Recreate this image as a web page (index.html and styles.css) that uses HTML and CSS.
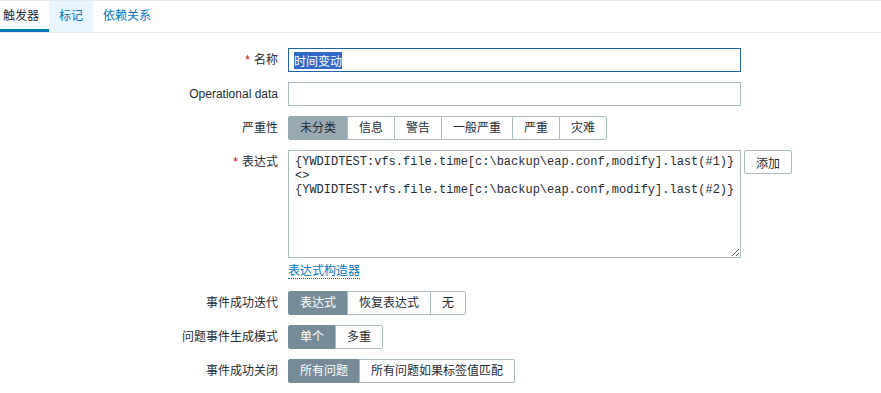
FILE: index.html
```html
<!DOCTYPE html>
<html lang="zh-CN">
<head>
  <meta charset="UTF-8" />
  <title>触发器</title>
<link rel="stylesheet" href="styles.css">
</head>
<body>
  <ul class="tabs">
    <li class="tab active">触发器</li>
    <li class="tab hover">标记</li>
    <li class="tab">依赖关系</li>
  </ul>

  <div class="form">
    <label class="form-label"><span class="req">*</span>名称</label>
    <div class="form-field">
      <input type="text" class="text-input focused" value="时间变动" autofocus onfocus="this.select()" />
    </div>

    <label class="form-label">Operational data</label>
    <div class="form-field">
      <input type="text" class="text-input" />
    </div>

    <label class="form-label">严重性</label>
    <div class="form-field">
      <div class="radio-group">
        <span class="radio-btn soft">未分类</span>
        <span class="radio-btn">信息</span>
        <span class="radio-btn">警告</span>
        <span class="radio-btn">一般严重</span>
        <span class="radio-btn">严重</span>
        <span class="radio-btn">灾难</span>
      </div>
    </div>

    <label class="form-label"><span class="req">*</span>表达式</label>
    <div class="form-field">
      <div class="expr-row">
        <textarea class="expr" wrap="off" spellcheck="false">{YWDIDTEST:vfs.file.time[c:\backup\eap.conf,modify].last(#1)}
&lt;&gt;
{YWDIDTEST:vfs.file.time[c:\backup\eap.conf,modify].last(#2)}</textarea>
        <button class="add-btn">添加</button>
      </div>
      <div class="link-row"><a class="link">表达式构造器</a></div>
    </div>

    <label class="form-label">事件成功迭代</label>
    <div class="form-field">
      <div class="radio-group">
        <span class="radio-btn on">表达式</span>
        <span class="radio-btn">恢复表达式</span>
        <span class="radio-btn">无</span>
      </div>
    </div>

    <label class="form-label">问题事件生成模式</label>
    <div class="form-field">
      <div class="radio-group">
        <span class="radio-btn on">单个</span>
        <span class="radio-btn">多重</span>
      </div>
    </div>

    <label class="form-label">事件成功关闭</label>
    <div class="form-field">
      <div class="radio-group">
        <span class="radio-btn on">所有问题</span>
        <span class="radio-btn">所有问题如果标签值匹配</span>
      </div>
    </div>
  </div>
</body>
</html>
```

FILE: styles.css
```css
body {
  margin: 0;
  padding: 0;
  background: #fff;
  color: #1f2c33;
  font-family: "Liberation Sans", Arial, "Noto Sans CJK SC", sans-serif;
  font-size: 12px;
}
.tabs {
  display: flex;
  margin: 0;
  padding: 0;
  list-style: none;
  border-top: 1px solid #e6e9eb;
  border-bottom: 1px solid #ebeef0;
}
.tab {
  height: 31px;
  line-height: 31px;
  padding: 0 10px;
  color: #0275b8;
}
.tab.active {
  padding-left: 3px;
  color: #1f2c33;
  box-shadow: inset 0 -3px 0 #0275b8;
}
.tab.hover {
  background: #e8f5ff;
}
.form {
  display: grid;
  grid-template-columns: 278px auto;
  column-gap: 10px;
  row-gap: 10px;
  padding-top: 15px;
}
.form-label {
  text-align: right;
  line-height: 24px;
}
.req {
  color: #d40000;
  margin-right: 4px;
}
.text-input {
  display: block;
  box-sizing: border-box;
  width: 453px;
  height: 24px;
  margin: 0;
  padding: 0 5px;
  border: 1px solid #acbbc2;
  border-radius: 0;
  font-family: "Liberation Sans", Arial, "Noto Sans CJK SC", sans-serif;
  font-size: 12px;
  color: #1f2c33;
  outline: none;
}
.text-input.focused {
  border-color: #1f65a6;
}
.text-input::selection {
  background: #3169c6;
  color: #fff;
}
.radio-group {
  display: flex;
}
.radio-btn {
  height: 22px;
  line-height: 22px;
  padding: 0 11px;
  border: 1px solid #acbbc2;
  background: #fff;
  margin-left: -1px;
}
.radio-btn:first-child {
  margin-left: 0;
  border-radius: 2px 0 0 2px;
}
.radio-btn:last-child {
  border-radius: 0 2px 2px 0;
}
.radio-btn.soft {
  background: #98a9b3;
  border-color: #98a9b3;
}
.radio-btn.on {
  background: #768d99;
  border-color: #768d99;
  color: #fff;
}
.expr-row {
  display: flex;
  align-items: flex-start;
}
.expr {
  display: block;
  box-sizing: border-box;
  width: 453px;
  height: 108px;
  margin: 0;
  padding: 4px 6px;
  border: 1px solid #acbbc2;
  font-family: "Liberation Mono", "Courier New", monospace;
  font-size: 12px;
  line-height: 14px;
  white-space: pre;
  overflow: hidden;
  color: #1f2c33;
  outline: none;
}
.add-btn {
  margin-left: 3px;
  height: 24px;
  padding: 0 11px;
  border: 1px solid #acbbc2;
  border-radius: 2px;
  background: #fff;
  color: #1f2c33;
  font-family: "Liberation Sans", Arial, "Noto Sans CJK SC", sans-serif;
  font-size: 12px;
}
.link-row {
  height: 17px;
  padding-top: 6px;
}
.link {
  display: inline-block;
  line-height: 14px;
  color: #0275b8;
  border-bottom: 1px dotted #0275b8;
}
```
